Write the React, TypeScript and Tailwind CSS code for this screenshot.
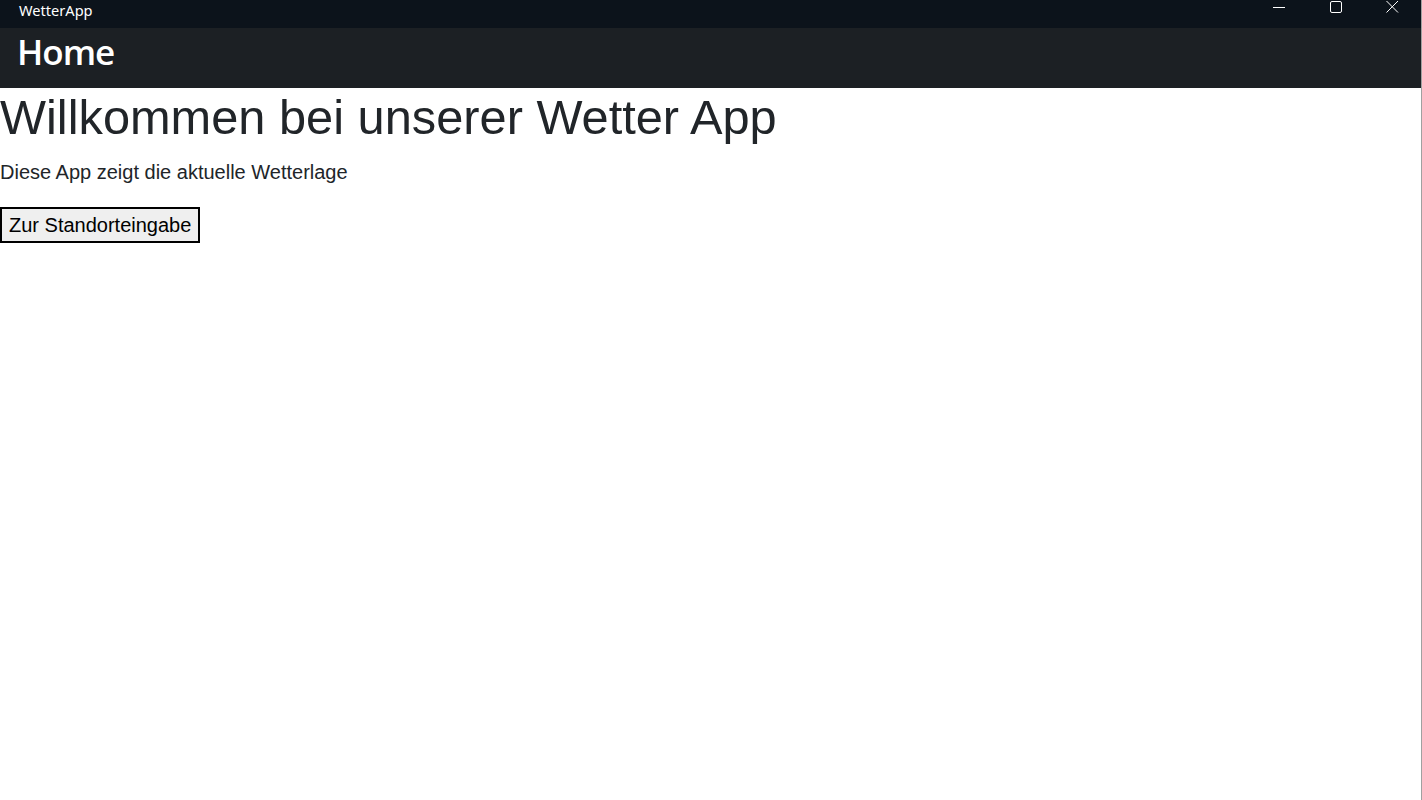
import React from "react";

export default function App() {
  return (
    <div className="w-[1422px] h-[800px] bg-white flex flex-col overflow-hidden border-r border-[#a0a0a0]" style={{ fontFamily: "'Liberation Sans', Arial, sans-serif" }}>
      <div className="h-[28px] bg-[#0c131b] flex items-start justify-between shrink-0">
        <div className="pl-[19px] text-[14.6px] leading-[20px] text-white" style={{ fontFamily: "'Noto Sans', 'Open Sans', sans-serif" }}>WetterApp</div>
        <div className="flex items-start">
          <div className="w-[57px] h-[28px] flex justify-center">
            <svg width="12" height="16" viewBox="0 0 12 16"><line x1="0" y1="7.5" x2="12" y2="7.5" stroke="white" strokeWidth="1" /></svg>
          </div>
          <div className="w-[57px] h-[28px] flex justify-center">
            <svg width="12" height="14" viewBox="0 0 12 14"><rect x="0.5" y="1.5" width="11" height="11" rx="1.5" fill="none" stroke="white" strokeWidth="1" /></svg>
          </div>
          <div className="w-[57px] h-[28px] flex justify-center">
            <svg width="13" height="14" viewBox="0 0 13 14"><path d="M0.5 1 L12 12.5 M12 1 L0.5 12.5" stroke="white" strokeWidth="1" /></svg>
          </div>
        </div>
      </div>
      <div className="h-[60px] bg-[#1c2024] flex items-start pt-[6px] pl-[17px] shrink-0">
        <span className="text-white text-[35px] font-semibold leading-[35px] tracking-[-1px]" style={{ fontFamily: "'Open Sans', 'Noto Sans', sans-serif" }}>Home</span>
      </div>
      <div className="text-[#212529]">
        <h1 className="text-[48.75px] leading-[1.2] font-normal mb-2">Willkommen bei unserer Wetter App</h1>
        <p className="text-[20px] leading-[1.5] mb-[20px] mt-[10px]">Diese App zeigt die aktuelle Wetterlage</p>
        <button className="h-[36px] px-[7px] border-2 border-black bg-[#efefef] text-black text-[20px] leading-none">Zur Standorteingabe</button>
      </div>
    </div>
  );
}
